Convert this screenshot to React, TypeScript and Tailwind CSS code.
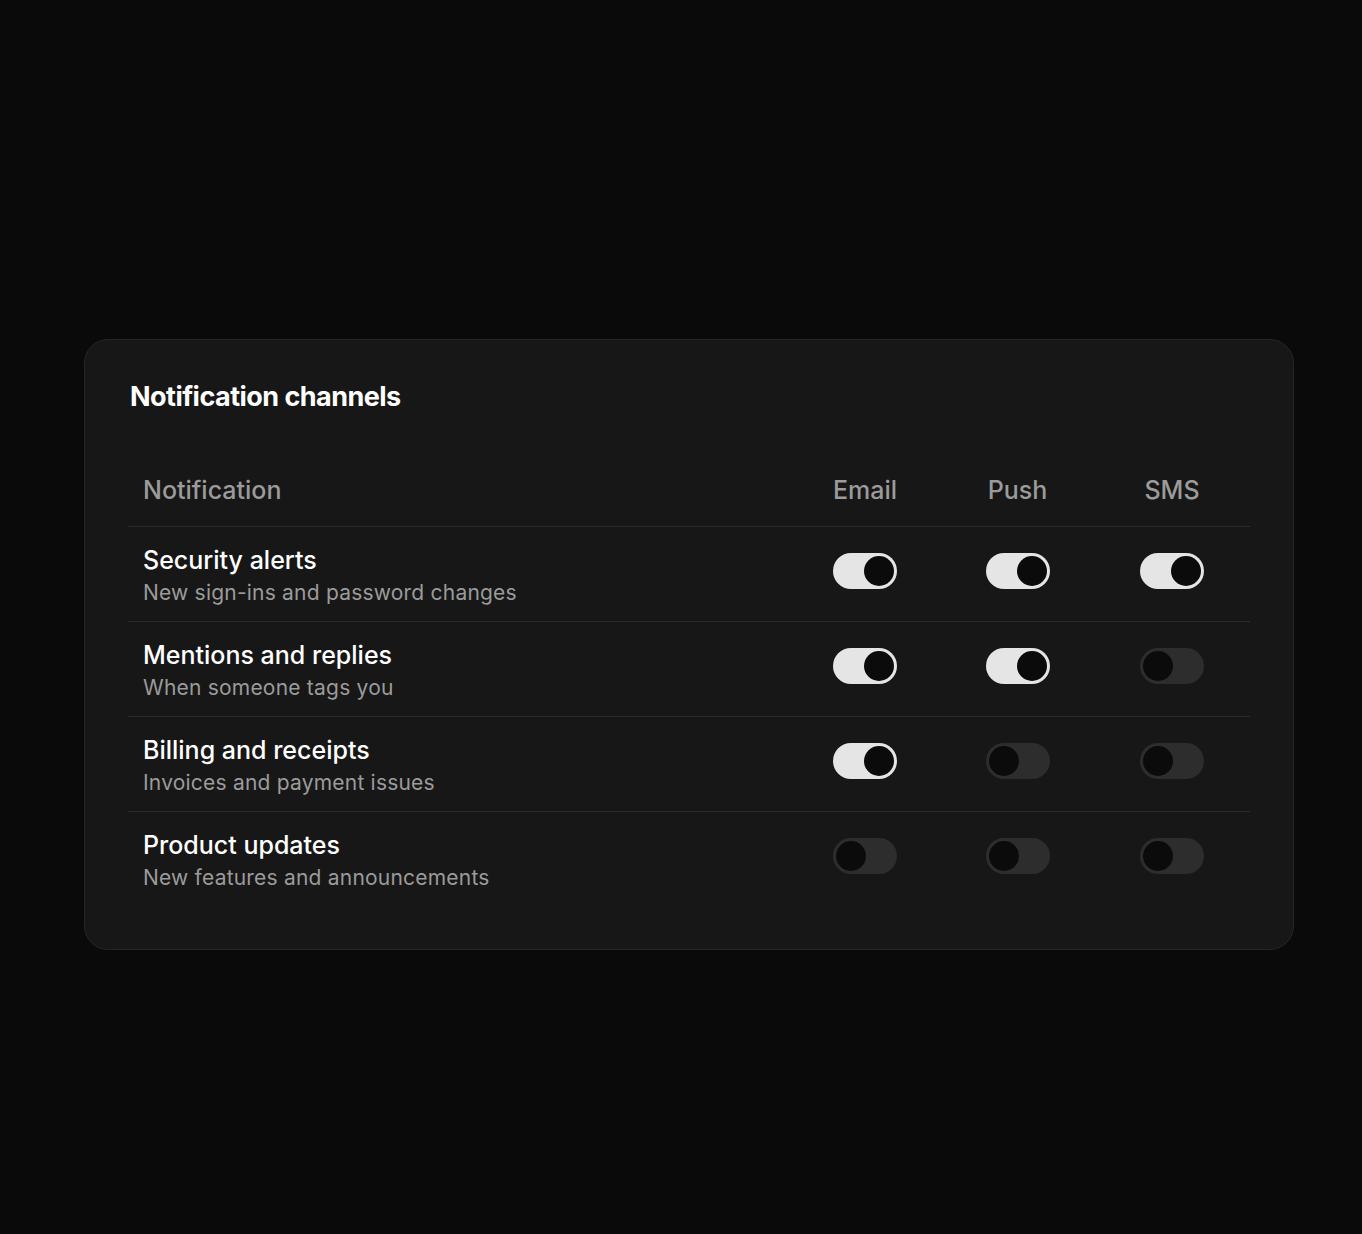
import React from 'react';

type Channel = 'email' | 'push' | 'sms';

const rows: { title: string; desc: string; on: Record<Channel, boolean> }[] = [
  { title: 'Security alerts', desc: 'New sign-ins and password changes', on: { email: true, push: true, sms: true } },
  { title: 'Mentions and replies', desc: 'When someone tags you', on: { email: true, push: true, sms: false } },
  { title: 'Billing and receipts', desc: 'Invoices and payment issues', on: { email: true, push: false, sms: false } },
  { title: 'Product updates', desc: 'New features and announcements', on: { email: false, push: false, sms: false } },
];

const colWidth: Record<Channel, string> = {
  email: 'w-[152px]',
  push: 'w-[153px]',
  sms: 'w-[156px]',
};

function Toggle({ on }: { on: boolean }) {
  return (
    <button
      role="switch"
      aria-checked={on}
      className={`w-[64px] h-[36px] rounded-full flex items-center px-[3px] ${
        on ? 'bg-[#e5e5e5] justify-end' : 'bg-[#2d2d2d] justify-start'
      }`}
    >
      <span className="w-[30px] h-[30px] rounded-full bg-[#0b0b0b]" />
    </button>
  );
}

export default function App() {
  return (
    <div className="min-h-[1234px] bg-[#0a0a0a] pt-[339px] px-[84px] font-['Inter',sans-serif]">
      <div className="w-[1210px] rounded-[24px] border border-[#262626] bg-[#171717] px-[43px] pt-[43px] pb-[43px]">
        <h2 className="text-[27px] leading-[28px] font-bold tracking-[-0.02em] text-white ml-[2px]">
          Notification channels
        </h2>

        <div className="mt-[44px]">
          <div className="flex items-center h-[72px] border-b border-[#2a2a2a] text-[25px] font-medium text-[#9b9b9b]">
            <div className="flex-1 px-[15px]">Notification</div>
            <div className={`${colWidth.email} text-center`}>Email</div>
            <div className={`${colWidth.push} text-center`}>Push</div>
            <div className={`${colWidth.sms} text-center`}>SMS</div>
          </div>

          {rows.map((r, i) => (
            <div
              key={r.title}
              className={`flex items-center pt-[12px] pb-[11px] ${i < rows.length - 1 ? 'border-b border-[#2a2a2a]' : ''}`}
            >
              <div className="flex-1 px-[15px] pt-[5px]">
                <div className="text-[25px] leading-[32px] font-medium text-white">{r.title}</div>
                <div className="text-[21px] leading-[34px] text-[#9b9b9b] tracking-[0.01em]">{r.desc}</div>
              </div>
              {(['email', 'push', 'sms'] as Channel[]).map((c) => (
                <div key={c} className={`${colWidth[c]} flex justify-center pb-[8px]`}>
                  <Toggle on={r.on[c]} />
                </div>
              ))}
            </div>
          ))}
        </div>
      </div>
    </div>
  );
}
